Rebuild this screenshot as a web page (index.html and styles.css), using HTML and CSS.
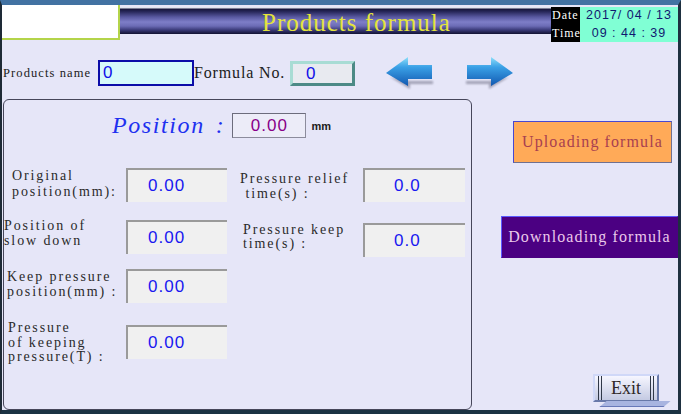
FILE: index.html
```html
<!DOCTYPE html>
<html>
<head>
<meta charset="utf-8">
<link rel="stylesheet" href="styles.css">
</head>
<body>
<div class="screen">
  <header class="header">
    <div class="logo"></div>
    <div class="titlebar">Products formula</div>
    <div class="datetime">
      <div class="dt-labels"><span>Date</span><span>Time</span></div>
      <div class="dt-values"><span>2017/ 04 / 13</span><span>09 : 44 : 39</span></div>
    </div>
  </header>
  <div class="toolbar">
    <span class="pname-label">Products name</span>
    <div class="pname-box">0</div>
    <span class="fno-label">Formula No.</span>
    <div class="fno-box"><div class="fno-inner">0</div></div>
    <svg class="arrow arrow-left" width="50" height="34" viewBox="0 0 50 34">
      <defs>
        <linearGradient id="ga" x1="0" y1="0" x2="0" y2="1">
          <stop offset="0" stop-color="#8ee0fa"/>
          <stop offset="0.35" stop-color="#3aa0e6"/>
          <stop offset="1" stop-color="#1258b0"/>
        </linearGradient>
        <filter id="fa" x="-20%" y="-20%" width="140%" height="140%"><feGaussianBlur stdDeviation="1.2"/></filter>
      </defs>
      <polygon points="5,21 25,33 25,28 48,28 48,25 25,25" fill="#6a6a80" opacity="0.55" filter="url(#fa)"/>
      <polygon points="1,17 23,1 23,9 47,9 47,23 23,23 23,30" fill="url(#ga)"/>
    </svg>
    <svg class="arrow arrow-right" width="50" height="34" viewBox="0 0 50 34">
      <defs>
        <linearGradient id="gb" x1="0" y1="0" x2="0" y2="1">
          <stop offset="0" stop-color="#8ee0fa"/>
          <stop offset="0.35" stop-color="#3aa0e6"/>
          <stop offset="1" stop-color="#1258b0"/>
        </linearGradient>
        <filter id="fb" x="-20%" y="-20%" width="140%" height="140%"><feGaussianBlur stdDeviation="1.2"/></filter>
      </defs>
      <g transform="translate(50,0) scale(-1,1)">
        <polygon points="5,21 25,33 25,28 48,28 48,25 25,25" fill="#6a6a80" opacity="0.55" filter="url(#fb)"/>
        <polygon points="1,17 23,1 23,9 47,9 47,23 23,23 23,30" fill="url(#gb)"/>
      </g>
    </svg>
  </div>
  <div class="main">
    <section class="panel">
      <div class="pos-row">
        <span class="pos-label">Position</span><span class="pos-colon">:</span>
        <div class="pos-box">0.00</div>
        <span class="mm">mm</span>
      </div>
      <div class="grid">
        <div class="lab l1">Original
position(mm):</div>
        <div class="val">0.00</div>
        <div class="lab r1">Pressure relief
 time(s) :</div>
        <div class="val vr">0.0</div>

        <div class="lab l2">Position of
slow down</div>
        <div class="val">0.00</div>
        <div class="lab r2">Pressure keep
time(s) :</div>
        <div class="val vr vr2">0.0</div>

        <div class="lab l3">Keep pressure
position(mm) :</div>
        <div class="val">0.00</div>
        <div></div>
        <div></div>

        <div class="lab l4">Pressure
of keeping
pressure(T) :</div>
        <div class="val">0.00</div>
      </div>
    </section>
    <aside class="side">
      <button class="btn upload">Uploading formula</button>
      <button class="btn download">Downloading formula</button>
      <div class="exit"><span class="exit-in">Exit</span></div>
    </aside>
  </div>
</div>
</body>
</html>
```
FILE: styles.css
```css
* { box-sizing: border-box; }

body {
  margin: 0;
  background: #1c3444;
  font-family: "Liberation Serif", serif;
}

.screen {
  width: 681px;
  height: 414px;
  background: #e6e6f8;
  border-left: 2px solid #1e2a36;
  border-right: 3px solid #1e3040;
  border-top: 5px solid #4272a2;
  border-bottom: 4px solid #1a3242;
  display: flex;
  flex-direction: column;
  overflow: hidden;
}

/* header */
.header {
  display: flex;
  align-items: flex-start;
  height: 37px;
  flex: none;
}

.logo {
  width: 118px;
  height: 35px;
  background: #ffffff;
  border-right: 2px solid #b4d44a;
  border-bottom: 2px solid #b4d44a;
}

.titlebar {
  flex: 1;
  height: 27px;
  margin-top: 2px;
  padding-left: 142px;
  padding-top: 4px;
  line-height: 23px;
  background: linear-gradient(#dfe3ee 0, #dfe3ee 1px, #14143a 2px, #2a2a5e 5px, #5858a0 10px, #7e7ec8 15px, #6c6cb6 19px, #3a3a78 23px, #121232 27px);
  color: #e4e43c;
  font-size: 25px;
  letter-spacing: 1px;
  white-space: pre;
}

.datetime {
  width: 127px;
  height: 35px;
  margin-top: 2px;
  display: flex;
}

.dt-labels {
  width: 29px;
  background: #000000;
  color: #ffffff;
  display: flex;
  flex-direction: column;
  font-size: 12px;
  letter-spacing: 1px;
  padding-left: 1px;
}

.dt-labels span,
.dt-values span {
  height: 17.5px;
  line-height: 17.5px;
}

.dt-values {
  flex: 1;
  background: #80ffd4;
  color: #101870;
  display: flex;
  flex-direction: column;
  align-items: center;
  font-family: "Liberation Sans", sans-serif;
  font-size: 12.5px;
  letter-spacing: 1px;
  white-space: pre;
}

/* toolbar */
.toolbar {
  display: flex;
  align-items: center;
  height: 34px;
  margin-top: 14px;
  flex: none;
}

.pname-label {
  width: 96px;
  padding-left: 1px;
  font-size: 12.5px;
  letter-spacing: 1.1px;
  color: #202020;
  white-space: pre;
}

.pname-box {
  width: 96px;
  height: 26px;
  border: 2px solid #0c0ca8;
  background: #d6fafa;
  color: #1010e8;
  font-family: "Liberation Sans", sans-serif;
  font-size: 17px;
  line-height: 22px;
  padding-left: 3px;
}

.fno-label {
  width: 96px;
  padding-left: 0;
  font-size: 16px;
  letter-spacing: 0.85px;
  color: #202020;
  white-space: pre;
}

.fno-box {
  width: 65px;
  height: 25px;
  border: 3px solid;
  border-color: #a8dcd4 #4c8a86 #4c8a86 #a8dcd4;
  background: #78b8b4;
}

.fno-inner {
  height: 100%;
  background: #e8eaf0;
  color: #1010e8;
  font-family: "Liberation Sans", sans-serif;
  font-size: 17px;
  line-height: 19px;
  padding-left: 13px;
}

.arrow-left { margin-left: 30px; }
.arrow-right { margin-left: 29px; }

/* main */
.main {
  flex: 1;
  display: flex;
  margin-top: 9px;
  min-height: 0;
}

.panel {
  width: 469px;
  margin-left: 1px;
  border: 1px solid #46465a;
  border-radius: 6px;
  display: flex;
  flex-direction: column;
}

.pos-row {
  display: flex;
  align-items: center;
  height: 25px;
  margin-top: 13px;
  padding-left: 108px;
}

.pos-label,
.pos-colon {
  font-style: italic;
  font-size: 24px;
  letter-spacing: 1.6px;
  color: #2030f0;
  white-space: pre;
}

.pos-colon {
  margin-left: 11px;
}

.pos-box {
  width: 74px;
  height: 25px;
  margin-left: 7px;
  border: 1px solid #8c8c9c;
  border-top-color: #6c6c7c;
  border-left-color: #6c6c7c;
  background: #ececf8;
  color: #880088;
  font-family: "Liberation Sans", sans-serif;
  font-size: 17px;
  line-height: 23px;
  text-align: center;
  letter-spacing: 1px;
}

.mm {
  margin-left: 5px;
  font-family: "Liberation Sans", sans-serif;
  font-size: 11px;
  font-weight: bold;
  color: #202020;
}

.grid {
  display: grid;
  grid-template-columns: 122px 101px 136px 102px;
  grid-template-rows: 52px 49px 56px 34px;
  margin-top: 30px;
  align-items: start;
}

.lab {
  font-size: 14px;
  letter-spacing: 1.9px;
  line-height: 15px;
  color: #2a2a2a;
  white-space: pre;
}

.l1 { padding-left: 8px; line-height: 16px; }
.l2 { padding-left: 0; margin-top: -1px; line-height: 14.5px; }
.l3 { padding-left: 3px; }
.l4 { padding-left: 4px; margin-top: -4px; line-height: 14.7px; }
.r1 { padding-left: 13px; padding-top: 3px; }
.r2 { padding-left: 16px; padding-top: 3px; line-height: 13.5px; }

.val {
  height: 34px;
  border-top: 2px solid #9a9a9a;
  border-left: 2px solid #9a9a9a;
  background: #f0f0f0;
  color: #1818f0;
  font-family: "Liberation Sans", sans-serif;
  font-size: 17px;
  line-height: 31px;
  letter-spacing: 1px;
  padding-left: 20px;
}

.vr { padding-left: 29px; }
.vr2 { margin-top: 3px; }

/* side */
.side {
  flex: 1;
  display: flex;
  flex-direction: column;
  align-items: flex-start;
}

.btn {
  appearance: none;
  margin: 0;
  padding: 0;
  height: 42px;
  border: 1px solid;
  font-family: "Liberation Serif", serif;
  font-size: 16px;
  letter-spacing: 1.1px;
  text-align: center;
  cursor: pointer;
}

.upload {
  width: 159px;
  margin-top: 22px;
  margin-left: 41px;
  background: #ffaa58;
  border-color: #4848d0 #707090 #707090 #4848d0;
  color: #a84050;
}

.download {
  width: 177px;
  margin-top: 53px;
  margin-left: 29px;
  background: #4b0082;
  border-color: #5a5aff #4b0082 #4b0082 #5a5aff;
  color: #eac8ea;
}

.exit {
  position: relative;
  width: 66px;
  height: 28px;
  margin-top: auto;
  margin-bottom: 8px;
  margin-left: 121px;
  border: 2px solid;
  border-color: #d0d8f8 #6878a8 #6878a8 #d0d8f8;
  background: linear-gradient(#f6f6ff, #c4cae2);
  display: flex;
  padding: 0 3px;
}

.exit::after {
  content: "";
  position: absolute;
  left: 8px;
  right: -10px;
  bottom: -7px;
  height: 5px;
  background: #a8b4e0;
  border-bottom: 1px solid #6878b8;
  transform: skewX(-50deg);
}

.exit-in {
  flex: 1;
  border-left: 4px double #303848;
  border-right: 4px double #303848;
  font-family: "Liberation Serif", serif;
  font-size: 18px;
  line-height: 24px;
  text-align: center;
  color: #302828;
}
```
